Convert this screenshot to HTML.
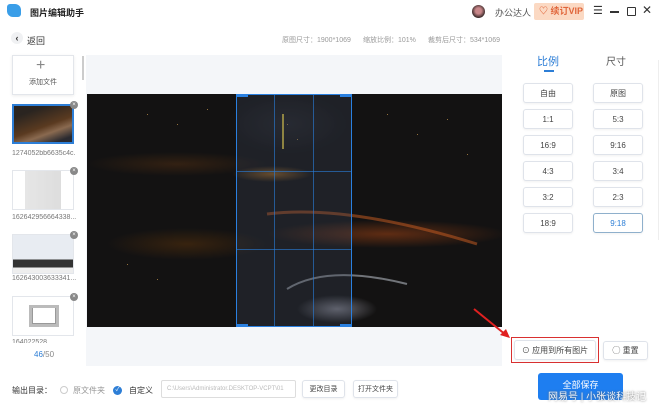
<!DOCTYPE html>
<html><head><meta charset="utf-8"><style>
*{margin:0;padding:0;box-sizing:border-box}
body{width:660px;height:410px;background:#fff;font-family:"Liberation Sans","Noto Sans CJK SC",sans-serif;position:relative;overflow:hidden;color:#333}
.a{position:absolute}
.btn{position:absolute;border:1px solid #dfe3ea;border-radius:3px;background:#fff;font-size:8px;color:#444;display:flex;align-items:center;justify-content:center;box-shadow:0 1px 2px rgba(0,0,0,.06)}
.th{position:absolute;left:12px;width:62px;height:40px;border:1px solid #e3e6eb;background:#fff}
.x{position:absolute;width:8px;height:8px;border-radius:50%;background:#888;color:#fff;font-size:6px;line-height:8px;text-align:center}
.lab{position:absolute;left:12px;font-size:7px;color:#777;width:64px;overflow:hidden;white-space:nowrap}
</style></head><body>
<div class="a" style="left:7px;top:4px;width:14px;height:13px;background:#3a9ee8;border-radius:3px 6px 3px 6px"></div>
<div class="a" style="left:30px;top:6px;font-size:9px;font-weight:bold;color:#222">图片编辑助手</div>
<div class="a" style="left:472px;top:5px;width:13px;height:13px;border-radius:50%;background:radial-gradient(circle at 50% 45%,#c9878a 30%,#3a2a2a 70%)"></div>
<div class="a" style="left:495px;top:6px;font-size:9px;color:#555">办公达人</div>
<div class="a" style="left:534px;top:3px;width:50px;height:17px;background:#fbd9c3;border-radius:2px;font-size:9px;font-weight:bold;color:#e0653a;line-height:17px;padding-left:5px">♡ 续订VIP</div>
<div class="a" style="left:593px;top:4px;font-size:11px;color:#333">☰</div>
<div class="a" style="left:610px;top:11px;width:9px;height:1.5px;background:#333"></div>
<div class="a" style="left:627px;top:7px;width:9px;height:9px;border:1.5px solid #333;border-radius:1px"></div>
<div class="a" style="left:642px;top:3px;font-size:12px;color:#333">✕</div>
<div class="a" style="left:11px;top:32px;width:12px;height:12px;border-radius:50%;background:#f0f1f3;font-size:9px;line-height:12px;text-align:center;font-weight:bold">‹</div>
<div class="a" style="left:27px;top:34px;font-size:9px;color:#333">返回</div>
<div class="a" style="left:282px;top:35px;font-size:7px;color:#999">原图尺寸：1900*1069</div>
<div class="a" style="left:363px;top:35px;font-size:7px;color:#999">缩放比例：101%</div>
<div class="a" style="left:428px;top:35px;font-size:7px;color:#999">裁剪后尺寸：534*1069</div>
<div class="a" style="left:12px;top:55px;width:62px;height:40px;border:1px solid #e3e6eb;box-shadow:0 1px 3px rgba(0,0,0,.08)"></div>
<div class="a" style="left:36px;top:57px;font-size:16px;color:#888;font-weight:200">+</div>
<div class="a" style="left:29px;top:77px;font-size:7px;color:#555">添加文件</div>
<div class="a" style="left:82px;top:56px;width:2px;height:24px;background:#ccc"></div>
<div class="th" style="top:104px;border:2px solid #2d7ed6;background:linear-gradient(160deg,#2a2420 20%,#5a3a20 55%,#8a6a50 70%,#2a2a30 90%)"></div>
<div class="x" style="left:70px;top:101px">×</div>
<div class="lab" style="top:150px">1274052bb6635c4c...</div>
<div class="th" style="top:170px;background:linear-gradient(90deg,#fff 20%,#e6e6e6 20%,#ddd 80%,#fff 80%)"></div>
<div class="x" style="left:70px;top:167px">×</div>
<div class="lab" style="top:214px">162642956664338...</div>
<div class="th" style="top:234px;background:linear-gradient(180deg,#e8ecf2 65%,#333 65%,#333 85%,#eee 85%)"></div>
<div class="x" style="left:70px;top:231px">×</div>
<div class="lab" style="top:275px">162643003633341...</div>
<div class="th" style="top:296px"><div class="a" style="left:16px;top:8px;width:30px;height:22px;background:#999;border:3px solid #bbb"></div><div class="a" style="left:20px;top:11px;width:22px;height:15px;background:#fff"></div></div>
<div class="x" style="left:70px;top:293px">×</div>
<div class="lab" style="top:339px;height:4px">164022528…</div>
<div class="a" style="left:34px;top:350px;font-size:8px;color:#888"><span style="color:#2d7ed6">46</span>/50</div>
<div class="a" style="left:86px;top:55px;width:416px;height:311px;background:#f4f6f9"></div>
<div class="a" style="left:87px;top:94px;width:415px;height:233px;background:
radial-gradient(ellipse 40px 14px at 250px 215px,rgba(200,200,215,.5),transparent),
radial-gradient(ellipse 120px 14px at 300px 140px,rgba(170,70,20,.5),transparent),
radial-gradient(ellipse 80px 16px at 100px 150px,rgba(110,60,10,.4),transparent),
radial-gradient(ellipse 90px 12px at 90px 70px,rgba(110,60,20,.35),transparent),
radial-gradient(ellipse 40px 8px at 185px 80px,rgba(220,140,40,.5),transparent),
radial-gradient(ellipse 60px 30px at 200px 30px,rgba(60,60,70,.3),transparent),
#131212"></div>
<svg class="a" style="left:87px;top:94px" width="415" height="233">
<g fill="#c99a50" opacity=".7"><rect x="60" y="20" width="1" height="1"/><rect x="90" y="30" width="1" height="1"/><rect x="120" y="15" width="1" height="1"/><rect x="300" y="20" width="1" height="1"/><rect x="330" y="40" width="1" height="1"/><rect x="360" y="25" width="1" height="1"/><rect x="380" y="60" width="1" height="1"/><rect x="200" y="30" width="1" height="1"/><rect x="210" y="45" width="1" height="1"/><rect x="40" y="170" width="1" height="1"/><rect x="70" y="185" width="1" height="1"/></g>
<rect x="195" y="20" width="2" height="35" fill="#d8c040" opacity=".8"/>
<path d="M200 195 Q240 170 320 190" stroke="#cfd6e0" stroke-width="2" fill="none" opacity=".5"/>
<path d="M180 120 Q260 110 390 150" stroke="#c05a20" stroke-width="3" fill="none" opacity=".55"/>
</svg>
<div class="a" style="left:236px;top:94px;width:116px;height:233px;background:rgba(60,70,90,.3);border:1.5px solid #2a80e0"></div>
<div class="a" style="left:274px;top:94px;width:1px;height:233px;background:rgba(42,128,224,.6)"></div>
<div class="a" style="left:313px;top:94px;width:1px;height:233px;background:rgba(42,128,224,.6)"></div>
<div class="a" style="left:236px;top:171px;width:116px;height:1px;background:rgba(42,128,224,.6)"></div>
<div class="a" style="left:236px;top:249px;width:116px;height:1px;background:rgba(42,128,224,.6)"></div>
<div class="a" style="left:236px;top:94px;width:12px;height:3px;background:#2a80e0"></div>
<div class="a" style="left:340px;top:94px;width:12px;height:3px;background:#2a80e0"></div>
<div class="a" style="left:236px;top:324px;width:12px;height:3px;background:#2a80e0"></div>
<div class="a" style="left:340px;top:324px;width:12px;height:3px;background:#2a80e0"></div>
<svg class="a" style="left:470px;top:305px" width="45" height="35"><line x1="4" y1="4" x2="36" y2="30" stroke="#e02020" stroke-width="2"/><polygon points="40,33 30,30 36,24" fill="#e02020"/></svg>
<div class="a" style="left:537px;top:53px;font-size:11px;color:#2d7ed6">比例</div>
<div class="a" style="left:544px;top:70px;width:10px;height:2px;background:#2d7ed6"></div>
<div class="a" style="left:606px;top:53px;font-size:10px;color:#555">尺寸</div>
<div class="a" style="left:658px;top:60px;width:1px;height:180px;background:#eee"></div>
<div class="btn" style="left:523px;top:83px;width:50px;height:20px">自由</div>
<div class="btn" style="left:593px;top:83px;width:50px;height:20px">原图</div>
<div class="btn" style="left:523px;top:109px;width:50px;height:20px">1:1</div>
<div class="btn" style="left:593px;top:109px;width:50px;height:20px">5:3</div>
<div class="btn" style="left:523px;top:135px;width:50px;height:20px">16:9</div>
<div class="btn" style="left:593px;top:135px;width:50px;height:20px">9:16</div>
<div class="btn" style="left:523px;top:161px;width:50px;height:20px">4:3</div>
<div class="btn" style="left:593px;top:161px;width:50px;height:20px">3:4</div>
<div class="btn" style="left:523px;top:187px;width:50px;height:20px">3:2</div>
<div class="btn" style="left:593px;top:187px;width:50px;height:20px">2:3</div>
<div class="btn" style="left:523px;top:213px;width:50px;height:20px">18:9</div>
<div class="btn" style="left:593px;top:213px;width:50px;height:20px;border-color:#8fb0cc;color:#2d7ed6">9:18</div>
<div class="a" style="left:511px;top:337px;width:88px;height:26px;border:1.5px solid #d93030"></div>
<div class="btn" style="left:514px;top:340px;width:82px;height:20px">⊙ 应用到所有图片</div>
<div class="btn" style="left:603px;top:341px;width:45px;height:19px">◯ 重置</div>
<div class="a" style="left:12px;top:385px;font-size:8px;color:#333">输出目录：</div>
<div class="a" style="left:60px;top:386px;width:8px;height:8px;border:1px solid #ccc;border-radius:50%"></div>
<div class="a" style="left:73px;top:385px;font-size:8px;color:#999">原文件夹</div>
<div class="a" style="left:113px;top:386px;width:9px;height:9px;border-radius:50%;background:#2d7ed6;color:#fff;font-size:6px;line-height:9px;text-align:center">✓</div>
<div class="a" style="left:129px;top:385px;font-size:8px;color:#333">自定义</div>
<div class="a" style="left:161px;top:380px;width:135px;height:18px;border:1px solid #ddd;border-radius:2px;font-size:6px;color:#bbb;line-height:16px;padding-left:5px;overflow:hidden;white-space:nowrap">C:\Users\Administrator.DESKTOP-VCPT\01</div>
<div class="btn" style="left:302px;top:380px;width:43px;height:18px;font-size:7px">更改目录</div>
<div class="btn" style="left:353px;top:380px;width:45px;height:18px;font-size:7px">打开文件夹</div>
<div class="a" style="left:538px;top:373px;width:85px;height:27px;background:#1e7ef0;border-radius:3px;color:#fff;font-size:9px;text-align:center;line-height:24px">全部保存</div>
<div class="a" style="left:548px;top:388px;font-size:10px;color:rgba(255,255,255,.9);text-shadow:0 0 2px #666;white-space:nowrap">网易号 | 小张谈科技记</div>
</body></html>
